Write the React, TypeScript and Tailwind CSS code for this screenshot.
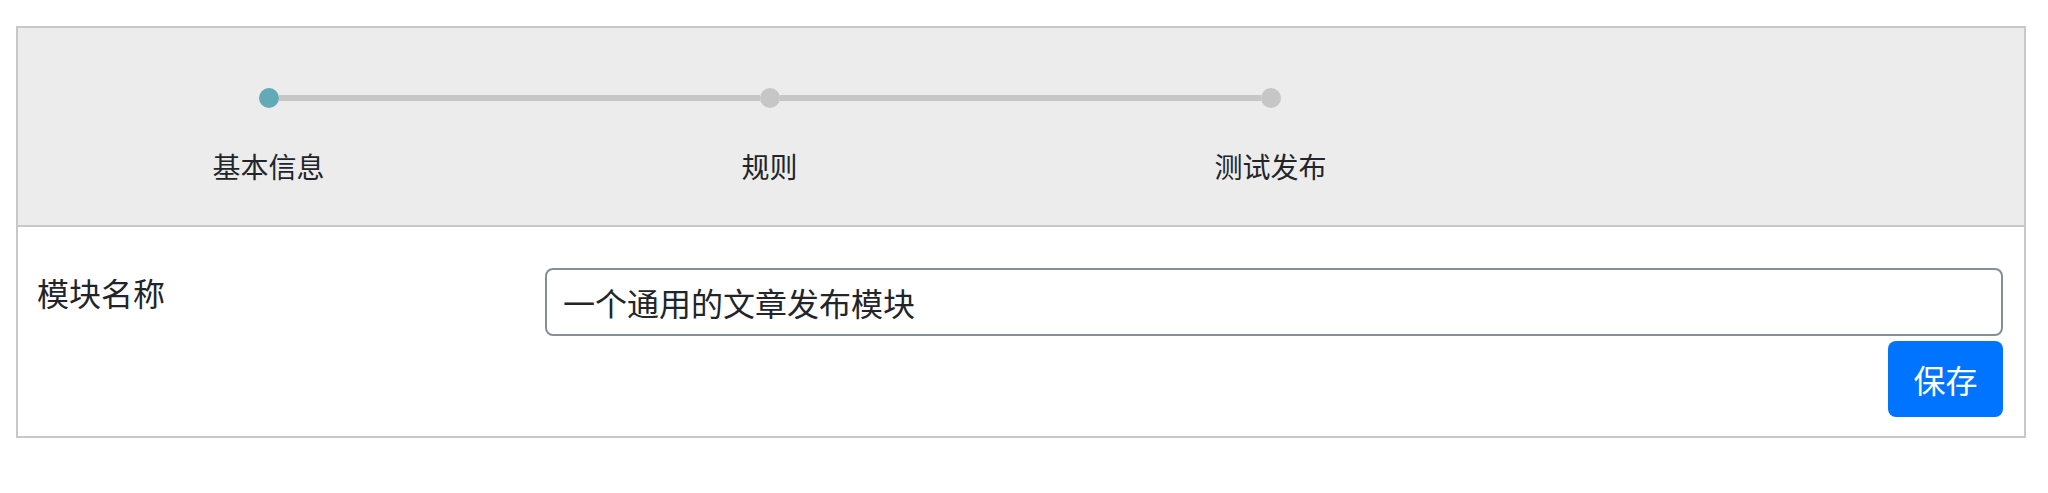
import React from 'react';

// Step bar + basic info form (first step of the module wizard).
const steps = ['基本信息', '规则', '测试发布'];

function Step({ label, index, active }: { label: string; index: number; active: boolean }) {
  const first = index === 0;
  const last = index === steps.length - 1;
  return (
    <div className="flex w-[501px] flex-col items-center">
      <div className="flex h-[20px] w-full items-center">
        <div className={first ? 'h-[6px] flex-1' : 'h-[6px] flex-1 bg-[#c6c6c6]'} />
        <div
          className={
            active
              ? 'h-[20px] w-[20px] shrink-0 rounded-full bg-[#63aab9]'
              : 'h-[20px] w-[20px] shrink-0 rounded-full bg-[#c6c6c6]'
          }
        />
        <div className={last ? 'h-[6px] flex-1' : 'h-[6px] flex-1 bg-[#c6c6c6]'} />
      </div>
      <div className="mt-[37px] text-[28px] leading-[42px] text-[#212529]">{label}</div>
    </div>
  );
}

export default function App() {
  return (
    <div
      className="min-h-screen bg-white pt-[26px]"
      style={{ fontFamily: '"Noto Sans CJK SC", "Noto Sans", sans-serif' }}
    >
      <div className="ml-[16px] w-[2010px] border-2 border-[#c8c8c8]">
        <div className="flex border-b-2 border-[#c8c8c8] bg-[#ececec] pt-[60px] pb-[38px]">
          {steps.map((s, i) => (
            <Step key={s} label={s} index={i} active={i === 0} />
          ))}
        </div>

        <div className="pr-[21px] pl-[19px] pt-[41px] pb-[19px]">
          <div className="flex">
            <label className="w-[508px] text-[32px] leading-[48px] text-[#212529]">模块名称</label>
            <div className="flex flex-1 flex-col items-end">
              <input
                className="h-[68px] w-full rounded-[8px] border-2 border-[#868e98] bg-white px-[16px] text-[32px] text-[#212529] outline-none"
                defaultValue="一个通用的文章发布模块"
              />
              <button className="mt-[5px] h-[76px] w-[115px] rounded-[8px] bg-[#0074ff] text-[32px] text-white">
                保存
              </button>
            </div>
          </div>
        </div>
      </div>
    </div>
  );
}
